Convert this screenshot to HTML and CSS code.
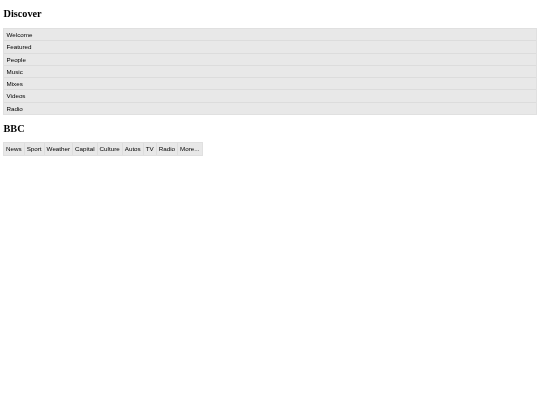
FILE: index.html
```html
<!DOCTYPE html>
<html lang="en">
<head>
<meta charset="utf-8">
<title>Discover</title>
<link rel="stylesheet" href="styles.css">
</head>
<body>
<h2 class="heading heading-first">Discover</h2>
<ul class="list">
<li class="list-item">Welcome</li>
<li class="list-item">Featured</li>
<li class="list-item">People</li>
<li class="list-item">Music</li>
<li class="list-item">Mixes</li>
<li class="list-item">Videos</li>
<li class="list-item">Radio</li>
</ul>
<h2 class="heading">BBC</h2>
<ul class="tabs">
<li class="tab">News</li>
<li class="tab">Sport</li>
<li class="tab">Weather</li>
<li class="tab">Capital</li>
<li class="tab">Culture</li>
<li class="tab">Autos</li>
<li class="tab">TV</li>
<li class="tab">Radio</li>
<li class="tab">More...</li>
</ul>
</body>
</html>
```
FILE: styles.css
```css
html, body {
  margin: 0;
  padding: 0;
  background: #fff;
}
body {
  padding: 8px 3px 0;
  font-family: "Liberation Sans", Arial, sans-serif;
  font-size: 6.25px;
  color: #000;
  filter: blur(0.3px);
}
.heading {
  margin: 8px 0 7px;
  padding-left: 0.5px;
  height: 12px;
  line-height: 12px;
  font-family: "Liberation Serif", "Times New Roman", serif;
  font-size: 10.25px;
  font-weight: bold;
  color: #000;
}
.heading-first {
  margin: 0 0 8px;
}
.list, .tabs {
  margin: 0;
  padding: 0;
  list-style: none;
  background: #e8e8e8;
  border: 1px solid #e0e0e0;
}
.list-item {
  height: 11.25px;
  line-height: 11.25px;
  padding-left: 2.5px;
  border-bottom: 1px solid #dcdcdc;
}
.list-item:last-child {
  border-bottom: 0;
}
.tabs {
  display: inline-flex;
  height: 12px;
}
.tab {
  line-height: 12px;
  padding: 0 2px;
  border-right: 1px solid #dedede;
}
.tab:last-child {
  border-right: 0;
}
```
